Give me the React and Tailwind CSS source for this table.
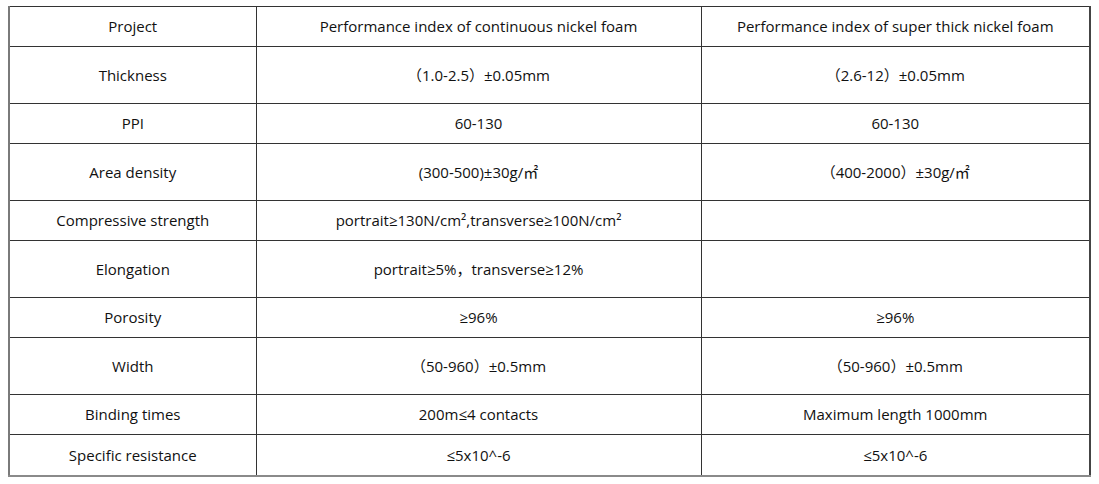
const rows = [
    { name: 'Thickness', a: '（1.0-2.5）±0.05mm', b: '（2.6-12）±0.05mm', tall: true },
    { name: 'PPI', a: '60-130', b: '60-130' },
    { name: 'Area density', a: '(300-500)±30g/㎡', b: '（400-2000）±30g/㎡', tall: true },
    { name: 'Compressive strength', a: 'portrait≥130N/cm²,transverse≥100N/cm²', b: '' },
    { name: 'Elongation', a: 'portrait≥5%，transverse≥12%', b: '', tall: true },
    { name: 'Porosity', a: '≥96%', b: '≥96%' },
    { name: 'Width', a: '（50-960）±0.5mm', b: '（50-960）±0.5mm', tall: true },
    { name: 'Binding times', a: '200m≤4 contacts', b: 'Maximum length 1000mm' },
    { name: 'Specific resistance', a: '≤5x10^-6', b: '≤5x10^-6', last: true },
];

const App = () => {
    return (
        <div className="bg-white w-[1099px] h-[484px] pt-[6px] pl-[8px] font-['Open_Sans','Noto_Sans_CJK_SC',sans-serif] text-[15px] text-[#111]">
            <table className="table-fixed border-collapse w-[1083px] border-t border-t-[#333] border-l-2 border-l-[#7a7a7a] border-r-2 border-r-[#444] border-b-2 border-b-[#8a8a8a]">
                <colgroup>
                    <col className="w-[247px]" />
                    <col className="w-[445px]" />
                    <col />
                </colgroup>
                <thead>
                    <tr className="h-[40px]">
                        <th className="font-normal text-center border-r border-b border-[#333]">Project</th>
                        <th className="font-normal text-center border-r border-b border-[#333]">Performance index of continuous nickel foam</th>
                        <th className="font-normal text-center border-b border-[#333]">Performance index of super thick nickel foam</th>
                    </tr>
                </thead>
                <tbody>
                    {rows.map((row) => (
                        <tr key={row.name} className={row.last ? 'h-[41px]' : row.tall ? 'h-[57px]' : 'h-[40px]'}>
                            <td className={`text-center border-r border-[#333] ${row.last ? '' : 'border-b'}`}>{row.name}</td>
                            <td className={`text-center border-r border-[#333] ${row.last ? '' : 'border-b'}`}>{row.a}</td>
                            <td className={`text-center border-[#333] ${row.last ? '' : 'border-b'}`}>{row.b}</td>
                        </tr>
                    ))}
                </tbody>
            </table>
        </div>
    );
};

export default App;
